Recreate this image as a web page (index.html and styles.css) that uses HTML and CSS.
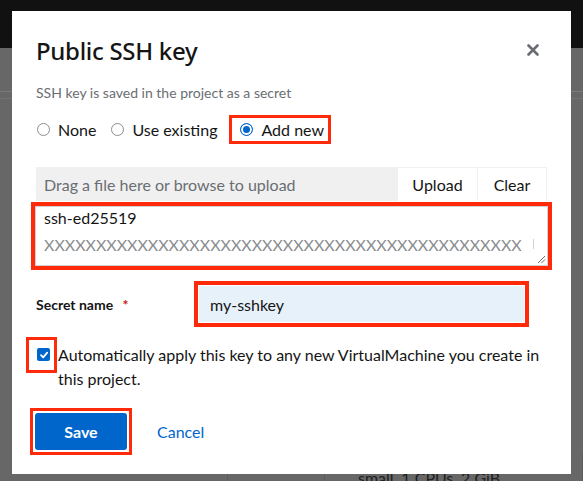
FILE: index.html
```html
<!DOCTYPE html>
<html>
<head>
<meta charset="utf-8">
<link rel="stylesheet" href="styles.css">
</head>
<body>
<div class="page">
  <div class="masthead"></div>
  <div class="page-body">
    <div class="page-line"></div>
    <div class="page-line second"></div>
    <div class="page-bottom">
      <div class="col c1"></div>
      <div class="col c2"></div>
      <div class="col c3"><span class="behind-text">small, 1 CPUs, 2 GiB</span></div>
    </div>
  </div>
</div>

<div class="modal">
  <header class="modal-header">
    <h1 class="modal-title">Public SSH key</h1>
    <button class="close" aria-label="Close">
      <svg width="12" height="12" viewBox="0 0 12 12"><path d="M1.5 1.5 L10.5 10.5 M10.5 1.5 L1.5 10.5" stroke="#6a6e73" stroke-width="2.6" stroke-linecap="round"/></svg>
    </button>
  </header>
  <p class="subtitle">SSH key is saved in the project as a secret</p>

  <div class="radios">
    <label class="radio"><span class="radio-dot"></span>None</label>
    <label class="radio"><span class="radio-dot"></span>Use existing</label>
    <label class="radio hl hl-radio"><span class="radio-dot checked"></span>Add new</label>
  </div>

  <div class="upload">
    <div class="upload-field">Drag a file here or browse to upload</div>
    <button class="upload-btn">Upload</button>
    <button class="upload-btn clear">Clear</button>
  </div>
  <div class="hl hl-area">
    <div class="textarea">
      <div class="ta-line">ssh-ed25519</div>
      <div class="ta-line muted">XXXXXXXXXXXXXXXXXXXXXXXXXXXXXXXXXXXXXXXXXXXXXXX</div>
      <span class="ta-scroll"></span>
      <svg class="resize" width="9" height="9" viewBox="0 0 9 9"><path d="M8 1 L1 8 M8 4.5 L4.5 8" stroke="#6a6e73" stroke-width="1"/></svg>
    </div>
  </div>

  <div class="form-row">
    <label class="form-label">Secret name <span class="req">*</span></label>
    <div class="hl hl-input"><div class="input">my-sshkey</div></div>
  </div>

  <div class="check-row">
    <span class="hl hl-check"><span class="checkbox">
      <svg width="10" height="10" viewBox="0 0 10 10"><path d="M2 5.2 L4.2 7.4 L8.2 2.6" stroke="#fff" stroke-width="1.8" fill="none" stroke-linecap="round" stroke-linejoin="round"/></svg>
    </span></span>
    <span class="check-text">Automatically apply this key to any new VirtualMachine you create in this project.</span>
  </div>

  <div class="actions">
    <span class="hl hl-btn"><button class="btn-primary">Save</button></span>
    <button class="btn-link">Cancel</button>
  </div>
</div>
</body>
</html>
```
FILE: styles.css
```css
* { box-sizing: border-box; }
html, body { margin: 0; padding: 0; }
body {
  width: 583px;
  height: 481px;
  overflow: hidden;
  font-family: "Lato", "Liberation Sans", sans-serif;
  color: #151515;
  background: #676767;
  position: relative;
}
.page { height: 481px; display: flex; flex-direction: column; }
.masthead { height: 48px; background: #111111; }
.page-body { flex: 1; display: flex; flex-direction: column; }
.page-line { margin-top: 43px; height: 1px; background: #7a7a7a; }
.page-line.second { margin-top: 6px; background: #727272; }
.page-bottom { margin-top: auto; height: 28px; display: flex; }
.col { height: 100%; border-right: 1px solid #5c5c5c; }
.c1 { width: 228px; }
.c2 { width: 97px; }
.c3 { flex: 1; padding-left: 33px; padding-top: 15px; }
.behind-text { font-size: 16px; color: #202020; }

.modal {
  position: absolute;
  left: 12px;
  top: 11px;
  width: 559px;
  height: 463px;
  background: #fff;
  padding: 24px 24px 0 24px;
  display: flex;
  flex-direction: column;
}
.modal-header { display: flex; align-items: center; justify-content: space-between; height: 30px; }
.modal-title {
  margin: 0;
  font-family: "Noto Sans", "Open Sans", sans-serif;
  font-weight: 500;
  font-size: 24px;
  letter-spacing: -0.3px;
  color: #151515;
}
.close { border: 0; background: none; padding: 0; margin-right: 8px; width: 12px; height: 12px; display: flex; }
.subtitle { margin: 19px 0 0; font-size: 14px; color: #6a6e73; line-height: 18px; }

.radios { display: flex; align-items: center; margin-top: 13px; margin-left: 1px; }
.radio { display: flex; align-items: center; font-size: 16px; gap: 8px; margin-right: 15px; line-height: 18px; }
.radio-dot {
  width: 13px; height: 13px; border-radius: 50%;
  border: 1px solid #8a8d90; background: #fff; display: inline-block;
}
.radio-dot.checked { border: 1px solid #0066cc; box-shadow: inset 0 0 0 2px #fff; background: #0066cc; }

.hl { border: 3px solid #ff2a0a; display: inline-flex; }
.hl-radio { padding: 4px 4px 4px 8px; margin-left: -3px; height: 29px; }

.upload { display: flex; height: 34px; margin-top: 23px; }
.upload-field {
  flex: 1; background: #f0f0f0; color: #6a6e73; font-size: 16px;
  display: flex; align-items: center; padding-left: 8px;
}
.upload-btn {
  border: 1px solid #f0f0f0; border-bottom: 0; background: #fff; font-family: inherit;
  font-size: 16px; color: #151515; padding: 0; width: 81px;
}
.upload-btn.clear { width: 69px; border-left: 0; }

.hl-area { display: flex; margin: 1px -5px 0; border-width: 4px; }
.textarea {
  flex: 1; position: relative; height: 60px; border: 1px solid #d2d2d2;
  padding: 0 8px 0 8px; font-size: 16px; overflow: hidden;
}
.ta-line { line-height: 22px; white-space: nowrap; overflow: hidden; }
.ta-line.muted { color: #8a8d90; width: 478px; margin-top: 5px; }
.ta-scroll { position: absolute; right: 13px; top: 32px; width: 1px; height: 10px; background: #d2d2d2; }
.resize { position: absolute; right: 1px; bottom: 1px; }

.form-row { display: flex; align-items: center; margin-top: 11px; }
.form-label { width: 158px; font-size: 14px; font-weight: 700; }
.req { color: #c9190b; margin-left: 6px; }
.hl-input { padding: 1px; width: 335px; border-width: 4px; }
.input {
  flex: 1; height: 36px; background: #e7f1fa; border: 1px solid #e7f1fa;
  font-size: 16px; display: flex; align-items: center; padding-left: 10px;
}

.check-row { display: flex; align-items: flex-start; margin-top: 10px; margin-left: -10px; margin-right: -4px; }
.hl-check { padding: 8px 4px 9px 8px; }
.checkbox {
  width: 13px; height: 13px; border-radius: 2px; background: #0066cc;
  display: flex; align-items: center; justify-content: center;
}
.check-text { font-size: 16px; line-height: 24px; padding-top: 6px; padding-left: 1px; }

.actions { display: flex; align-items: center; margin-top: 17px; margin-left: -6px; }
.hl-btn { padding: 2px; }
.btn-primary {
  width: 92px; height: 37px; border: 0; border-radius: 3px; background: #0066cc; color: #fff;
  font-family: inherit; font-size: 16px; font-weight: 700;
}
.btn-link { border: 0; background: none; color: #0066cc; font-family: inherit; font-size: 16px; margin-left: 17px; padding: 0 8px; }
```
